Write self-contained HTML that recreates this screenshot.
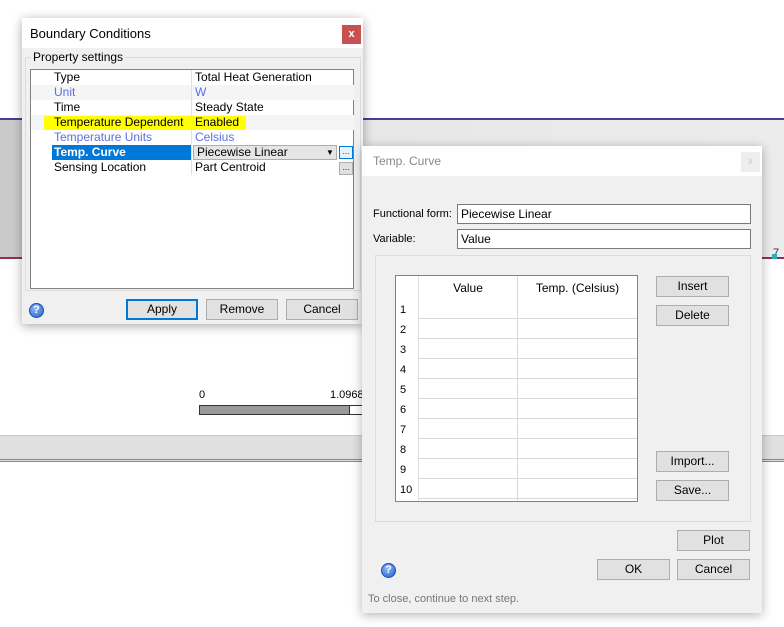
<!DOCTYPE html>
<html><head><meta charset="utf-8"><style>
*{box-sizing:border-box;margin:0;padding:0}
body{width:784px;height:627px;position:relative;overflow:hidden;background:#fff;font-family:"Liberation Sans",sans-serif;font-size:12px;color:#000}
.a{position:absolute}
.btn{position:absolute;background:#e1e1e1;border:1px solid #adadad;text-align:center;line-height:19px;font-size:12px}
.row{position:absolute;left:0;width:323px;height:15px;line-height:15px}
.help{position:absolute;width:15px;height:15px;border-radius:50%;background:radial-gradient(circle at 40% 35%,#8fb8ff,#1d5fd0);border:1px solid #1a4fa8;color:#fff;font-weight:bold;font-size:11px;text-align:center;line-height:13px}
</style></head><body>
<div class="a" style="left:0;top:118px;width:784px;height:141px;background:linear-gradient(90deg,#c9c9c9,#e6e6e6 30%,#ececec);border-top:2px solid #4a3f8a;border-bottom:2px solid #9a2a5a"></div>
<div class="a" style="left:0;top:435px;width:784px;height:27px;background:#e0e0e0;border-top:1px solid #c8c8c8;border-bottom:3px double #888"></div>
<div class="a" style="left:773px;top:247px;font-size:11px;color:#333">7</div>
<div class="a" style="left:772px;top:254px;width:5px;height:5px;background:#2ab0b0"></div>
<div class="a" style="left:199px;top:389px;font-size:11px">0</div>
<div class="a" style="left:330px;top:389px;font-size:11px">1.0968</div>
<div class="a" style="left:199px;top:405px;width:166px;height:10px;border:1px solid #333;background:#fff"><div style="width:150px;height:8px;background:#999;border-right:1px solid #333"></div></div>

<div class="a" style="left:22px;top:18px;width:341px;height:306px;background:#f0f0f0;box-shadow:0 2px 10px rgba(0,0,0,.35)">
 <div class="a" style="left:0;top:0;width:341px;height:30px;background:#fff"></div>
 <div class="a" style="left:8px;top:8px;font-size:13px">Boundary Conditions</div>
 <div class="a" style="left:320px;top:7px;width:19px;height:19px;background:#c75050;color:#fff;text-align:center;line-height:18px;font-size:11px;font-weight:bold">x</div>
 <div class="a" style="left:3px;top:39px;width:336px;height:234px;border:1px solid #dcdcdc"></div>
 <div class="a" style="left:9px;top:32px;padding:0 2px;background:#f0f0f0">Property settings</div>
 <div class="a" style="left:8px;top:51px;width:324px;height:220px;background:#fff;border:1px solid #828282">
  <div class="row" style="top:0"><span class="a" style="left:23px">Type</span><span class="a" style="left:164px">Total Heat Generation</span></div>
  <div class="row" style="top:15px;background:#f5f5f5;color:#5a6fe6"><span class="a" style="left:23px">Unit</span><span class="a" style="left:164px">W</span></div>
  <div class="row" style="top:30px"><span class="a" style="left:23px">Time</span><span class="a" style="left:164px">Steady State</span></div>
  <div class="row" style="top:45px;background:#f5f5f5"><div class="a" style="left:13px;top:1px;width:202px;height:14px;background:#ffff00;border-radius:2px"></div><span class="a" style="left:23px">Temperature Dependent</span><span class="a" style="left:164px">Enabled</span></div>
  <div class="row" style="top:60px;color:#5a6fe6"><span class="a" style="left:23px">Temperature Units</span><span class="a" style="left:164px">Celsius</span></div>
  <div class="row" style="top:75px"><div class="a" style="left:21px;width:140px;height:15px;background:#0078d7;color:#fff;font-weight:bold;padding-left:2px">Temp. Curve</div><div class="a" style="left:162px;width:144px;height:15px;background:#e5e5e5;border:1px solid #adadad;padding-left:3px;line-height:13px">Piecewise Linear<span class="a" style="left:132px;top:0;font-size:8px">▼</span></div><div class="a" style="left:308px;top:1px;width:14px;height:13px;border:1px solid #0078d7;background:#e5f1fb;font-size:8px;line-height:10px;text-align:center">...</div></div>
  <div class="row" style="top:90px"><span class="a" style="left:23px">Sensing Location</span><span class="a" style="left:164px">Part Centroid</span><div class="a" style="left:308px;top:2px;width:14px;height:13px;border:1px solid #adadad;background:#e1e1e1;font-size:8px;line-height:10px;text-align:center">...</div></div>
  <div class="a" style="left:160px;top:0;width:1px;height:105px;background:#e0e0e0"></div>
 </div>
 <div class="help" style="left:7px;top:285px">?</div>
 <div class="btn" style="left:104px;top:281px;width:72px;height:21px;border:2px solid #0078d7;line-height:17px">Apply</div>
 <div class="btn" style="left:184px;top:281px;width:72px;height:21px">Remove</div>
 <div class="btn" style="left:264px;top:281px;width:72px;height:21px">Cancel</div>
</div>

<div class="a" style="left:362px;top:146px;width:400px;height:467px;background:#f0f0f0;box-shadow:0 2px 10px rgba(0,0,0,.3)">
 <div class="a" style="left:0;top:0;width:400px;height:30px;background:#fff"></div>
 <div class="a" style="left:11px;top:8px;font-size:12px;color:#888">Temp. Curve</div>
 <div class="a" style="left:379px;top:6px;width:19px;height:20px;background:#eee;color:#ccc;text-align:center;line-height:19px;font-size:10px">x</div>
 <div class="a" style="left:11px;top:62px;font-size:11px">Functional form:</div>
 <div class="a" style="left:95px;top:58px;width:294px;height:20px;background:#fff;border:1px solid #7a7a7a;padding-left:3px;line-height:18px">Piecewise Linear</div>
 <div class="a" style="left:11px;top:87px;font-size:11px">Variable:</div>
 <div class="a" style="left:95px;top:83px;width:294px;height:20px;background:#fff;border:1px solid #7a7a7a;padding-left:3px;line-height:18px">Value</div>
 <div class="a" style="left:13px;top:109px;width:376px;height:267px;border:1px solid #dcdcdc"></div>
 <div class="a" style="left:33px;top:129px;width:243px;height:227px;background:#fff;border:1px solid #828282">
  <div class="a" style="left:22px;top:0;width:1px;height:225px;background:#e0e0e0"></div>
  <div class="a" style="left:121px;top:0;width:1px;height:225px;background:#d8d8d8"></div>
  <div class="a" style="left:22px;top:5px;width:100px;text-align:center">Value</div>
  <div class="a" style="left:122px;top:5px;width:119px;text-align:center">Temp. (Celsius)</div>
  <div class="a" style="left:4px;top:24px;font-size:11px;line-height:20px">1<br>2<br>3<br>4<br>5<br>6<br>7<br>8<br>9<br>10</div>
  <div class="a" style="left:22px;top:23px;width:219px;height:200px;background:repeating-linear-gradient(180deg,transparent 0 19px,#d8d8d8 19px 20px)"></div>
 </div>
 <div class="btn" style="left:294px;top:130px;width:73px;height:21px">Insert</div>
 <div class="btn" style="left:294px;top:159px;width:73px;height:21px">Delete</div>
 <div class="btn" style="left:294px;top:305px;width:73px;height:21px">Import...</div>
 <div class="btn" style="left:294px;top:334px;width:73px;height:21px">Save...</div>
 <div class="btn" style="left:315px;top:384px;width:73px;height:21px">Plot</div>
 <div class="btn" style="left:235px;top:413px;width:73px;height:21px">OK</div>
 <div class="btn" style="left:315px;top:413px;width:73px;height:21px">Cancel</div>
 <div class="help" style="left:19px;top:417px">?</div>
 <div class="a" style="left:6px;top:447px;font-size:11px;color:#777">To close, continue to next step.</div>
</div>
</body></html>
